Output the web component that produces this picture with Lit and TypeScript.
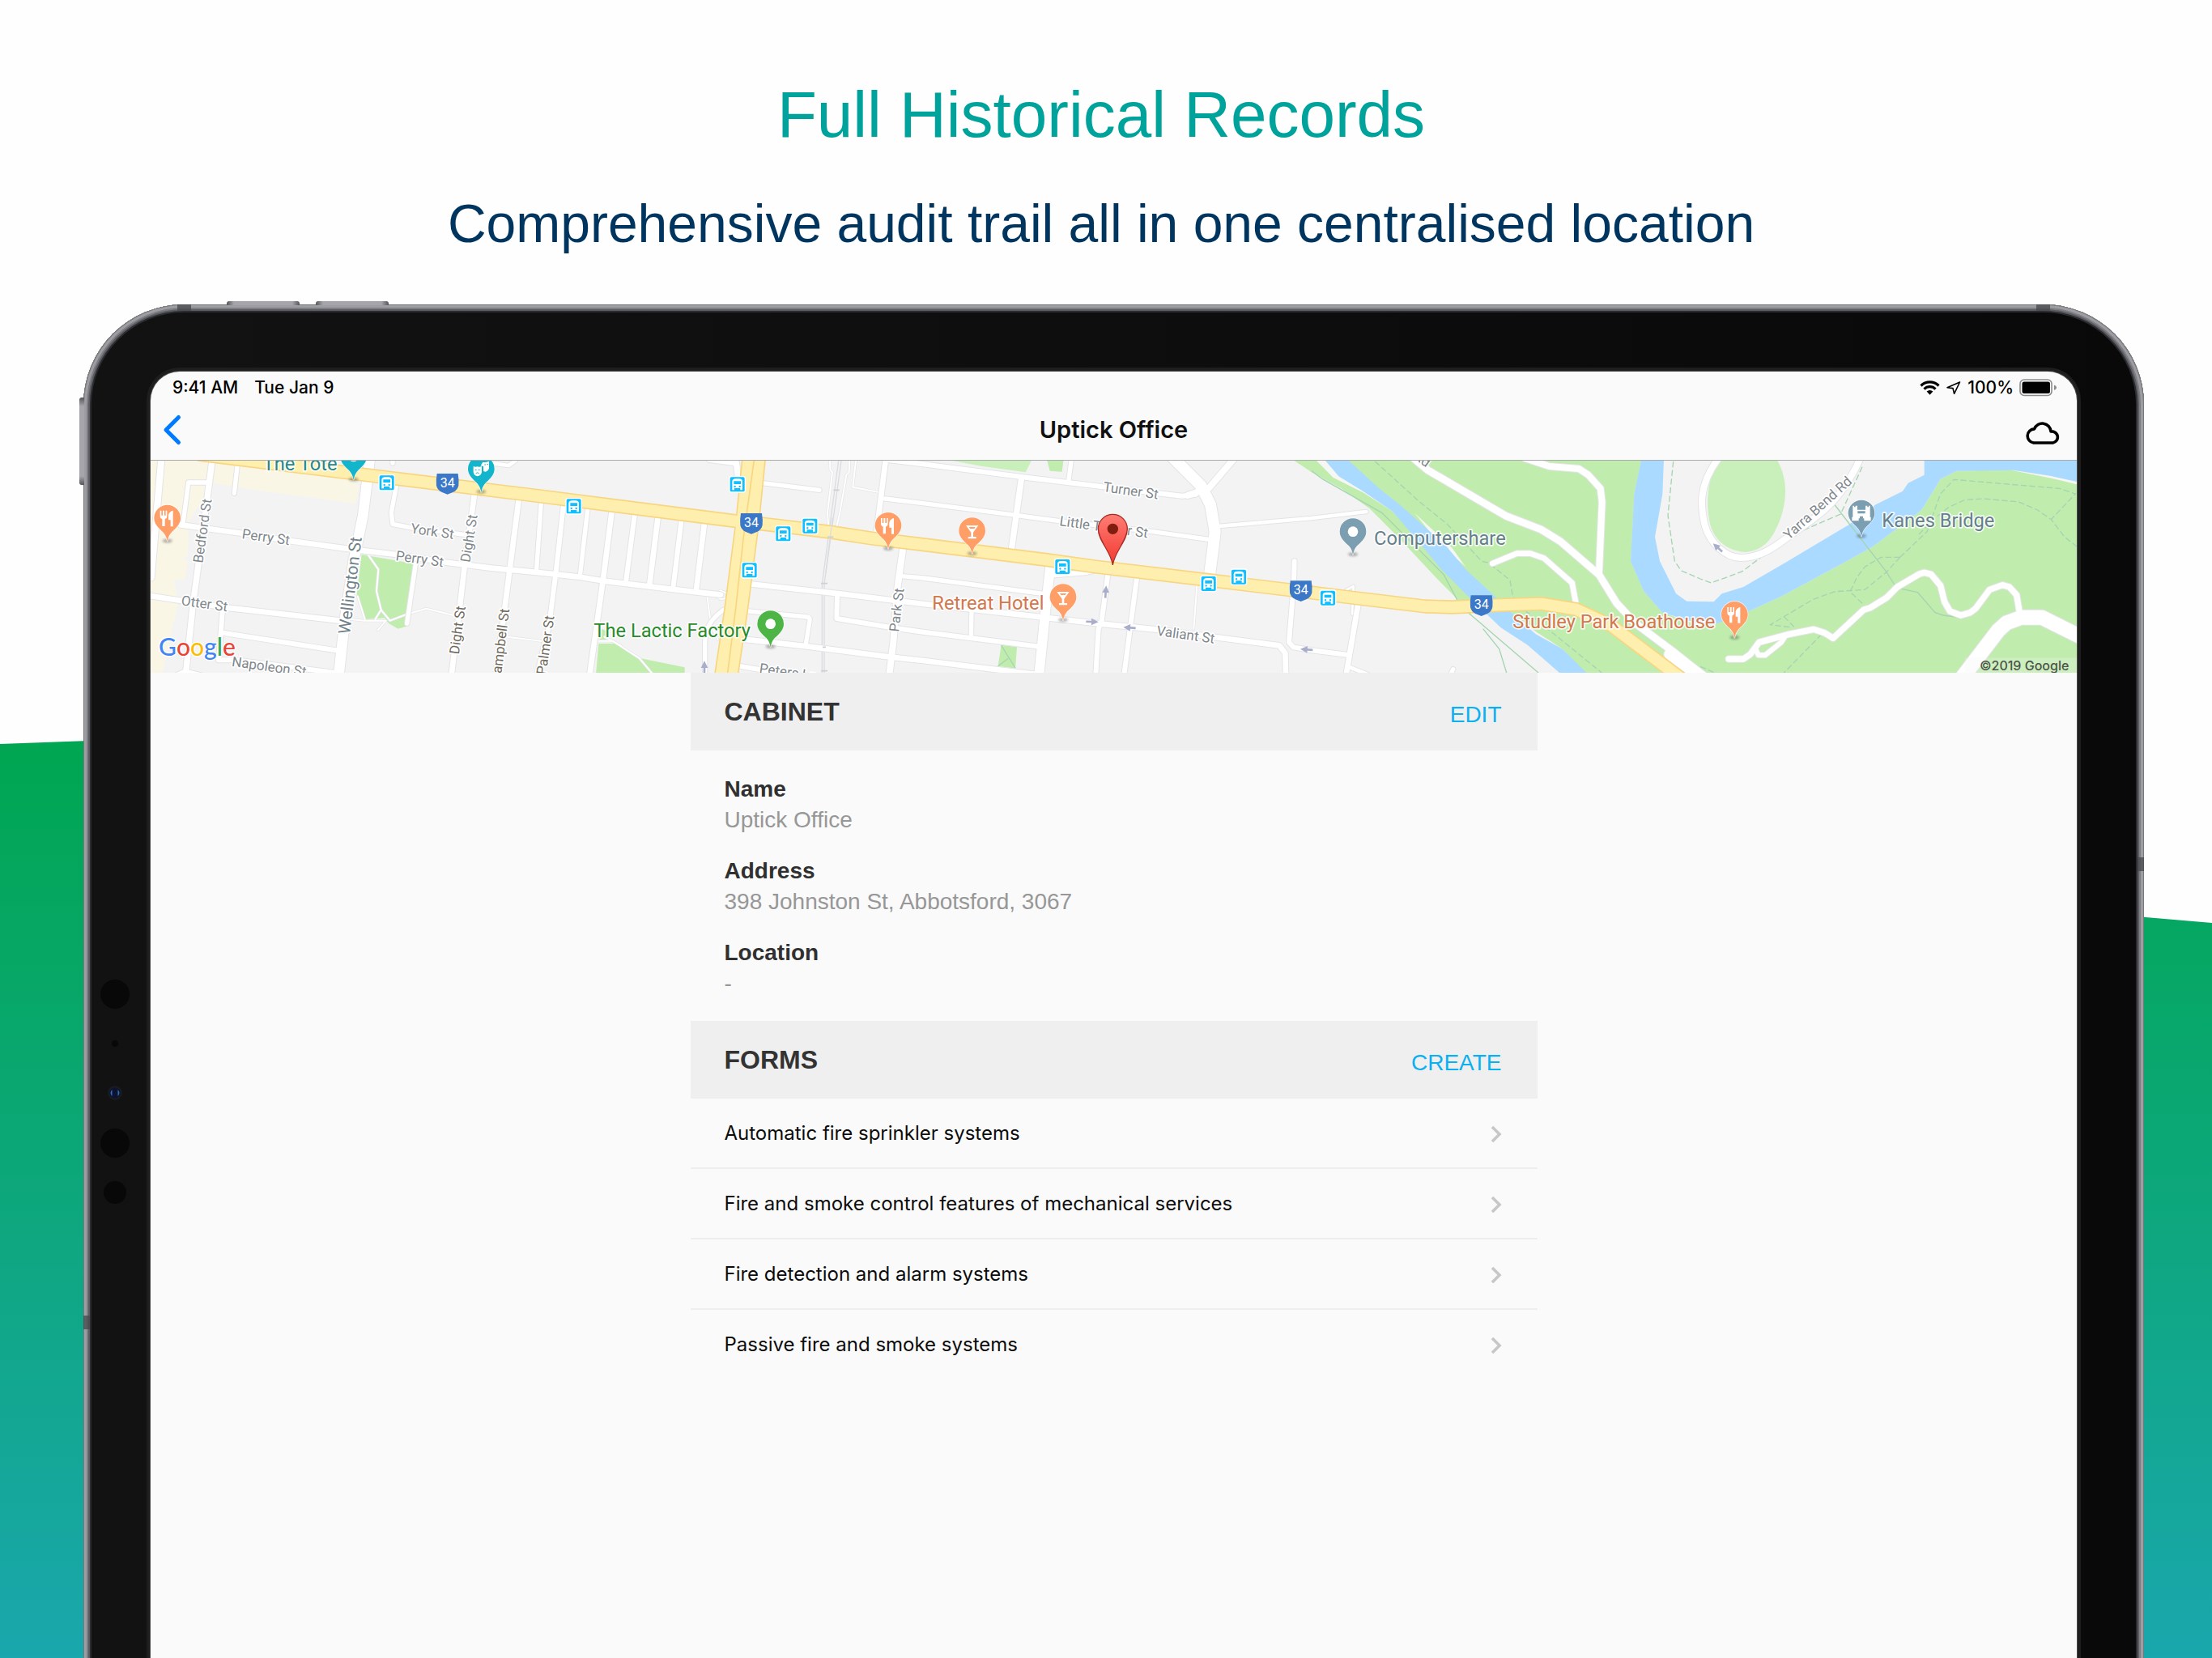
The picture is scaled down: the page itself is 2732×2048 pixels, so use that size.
import { LitElement, html, svg, css } from "lit";
import { customElement, property } from "lit/decorators.js";

type Pt = [number, number];

/* ---------- map data, drawn in the map's own canvas units ---------- */

/** Streets: [width, path]. */
const STREETS: [number, string][] = [
  [24, "M58 20L20 460"],
  [22, "M247 20L230 150L175 560L148 820"],
  [16, "M342 20L328 148"],
  [16, "M230 108H158L138 262"],
  [20, "M130 265L360 297L540 325L760 355L930 375L1120 405L1280 425L1440 440L1600 457L1690 472L2040 514L2130 524"],
  [38, "M830 20L805 230L770 400L740 600L715 820"],
  [20, "M10 527L300 572L740 622"],
  [16, "M930 110L910 220L915 262L980 275L1210 305"],
  [20, "M1218 150L1180 430L1160 600L1133 820"],
  [20, "M1382 172L1350 420L1298 820"],
  [16, "M1000 410L968 630"],
  [18, "M284 590L270 766H330L720 815"],
  [18, "M285 665L705 730"],
  [10, "M110 820L145 804L210 820"],
  [14, "M1290 38L1345 45L1370 27"],
  [16, "M915 20V36"],
  [16, "M1465 182L1448 430"],
  [18, "M1548 190L1520 440L1494 640L1450 820"],
  [16, "M1638 202L1610 445"],
  [20, "M1727 214L1695 465L1645 820"],
  [18, "M1812 224L1780 470"],
  [20, "M1898 236L1867 485"],
  [18, "M1985 246L1955 490"],
  [20, "M2070 258L2040 505"],
  [22, "M2090 22L2188 35L2196 100"],
  [16, "M2285 110L2496 136"],
  [20, "M2230 483L2570 520L2880 558L3320 607L3540 632L3740 652L4200 712L4222 740L4224 820"],
  [16, "M2215 583L2450 606Q2462 608 2460 620L2445 712"],
  [20, "M2210 688L2450 715L2760 755L2880 768L3290 818"],
  [18, "M2562 530L2560 612L2760 645L2880 662L3312 716"],
  [18, "M2180 785L2340 812"],
  [24, "M2806 350L2785 500L2770 700L2755 820"],
  [20, "M2742 20L2708 290"],
  [16, "M2740 168L2880 185L3230 230L3380 250L3730 290L3945 320"],
  [18, "M2750 24L2880 40L3250 88L3560 125L3840 158L3890 152"],
  [16, "M2800 455L2880 462L3325 520"],
  [22, "M3245 90L3208 355"],
  [16, "M3430 20L3420 98"],
  [42, "M3800 10L3910 120L3945 190L3962 290L3955 350L3942 450"],
  [24, "M4032 20L3940 128L3860 156"],
  [14, "M3975 270L4320 240L4522 216"],
  [36, "M3352 415L3335 570L3310 820"],
  [18, "M3350 452L3480 442L3530 430"],
  [18, "M3566 440L3542 620L3530 650L3520 820"],
  [18, "M3673 455L3625 820"],
  [16, "M3060 590L3058 682"],
  [18, "M4256 400L4254 480L4236 700L4252 718L4320 730L4450 746"],
  [20, "M4492 560L4448 820"],
  [14, "M4460 792L4530 820"],
  [8, "M4475 492L4470 595M4475 492L4448 506"],
  [16, "M4844 800L4834 822"],
  [26, "M4700 20L4750 62L5040 232L5170 282L5240 325L5385 450L5450 555L5520 630L5660 735L5780 830"],
  [24, "M5110 18L5200 48L5310 57L5345 80L5390 130L5396 180L5385 440"],
  [20, "M4990 408L5080 371H5130L5180 388L5285 480L5298 550"],
  [44, "M5648 745L5770 832"],
  [24, "M5826 20C5752 120 5760 200 5778 270C5796 330 5850 386 5910 387C6000 387 6060 325 6110 292C6200 230 6280 180 6352 20"],
  [22, "M5865 762H5920L5945 745L5978 700L6090 670L6180 652L6220 665L6252 685L6365 580L6390 572L6450 535L6490 495L6570 448L6590 442L6615 448L6650 490L6665 550L6685 585L6725 600L6760 590L6780 575L6832 505L6880 488L6905 495L6932 525L6943 590"],
  [18, "M5965 725L5975 748H6000L6060 700L6070 685"],
  [54, "M6735 825L6865 655L6895 628L6950 608H7025L7170 680"],
];

/** Narrow lanes and park paths. */
const LANES = [
  "M820 370L862 430L855 510L872 580L905 620L965 597L1040 575L1140 600",
  "M785 530L812 615",
  "M730 612L810 620H890L860 655",
  "M872 580L850 615",
  "M2632 20L2620 125L2720 145",
  "M2535 20L2536 60L2544 70L2526 220L2530 275",
  "M2608 20L2606 70L2596 80L2572 220L2560 272",
  "M3895 490L3883 650",
  "M2080 528L2095 640L2120 690",
  "M2110 522L2130 508L2155 520M2110 528L2130 540L2155 538",
  "M1665 695H1730L1830 760L1880 820M1700 680L1760 712",
  "M1340 680L1440 692L1490 700",
];

const RAIL = "M2578 20L2514 485V820M2568 20L2506 485V820";

const PARKS = [
  "M800 375L1000 410L965 595L970 640L935 650L900 630L885 610L815 615L782 520Z",
  "M1678 705H1740L1835 760L1997 793V820H1668Z",
  "M1690 650L1710 660L1705 690H1682Z",
  "M3340 27H3400L3395 68L3350 65Z",
  "M3170 710L3228 718L3222 797L3158 788Z",
  "M4245 20L4320 70L4430 130L4535 205L4650 320L4780 460L4865 545L5060 590L5150 660L5250 725L5340 820H7160V112L7060 88L6900 60L6710 65L6650 95L6580 210L6460 300L6400 345L6320 390L6060 530L5940 585L5760 640L5620 590L5550 510L5502 400L5515 150L5542 20Z",
];

const LAWNS = [
  "M2950 20H3285L3260 70L3100 48Z",
  "M5840 20C5776 80 5780 220 5802 280C5826 340 5880 365 5930 366C6000 360 6030 310 6054 250C6084 170 6084 90 6042 20Z",
];

const BANKS = "M4338 27H4372L4430 85L4520 140L4625 205L4740 330L4620 215L4510 145L4400 90ZM4700 220L4840 350L4890 420L4790 330ZM6920 64L7060 84L7160 108V116L7060 92Z";

const RIVERS = [
  "M4365 20H4450L4570 130L4652 195L4820 345L4890 430L5010 540L5060 590L5150 670L5250 725L5345 820H5246L5120 710L5020 645L4900 530L4800 430L4710 320L4620 215L4510 140L4420 85Z",
  "M5542 20H5625L5620 150L5592 310L5610 400L5670 520L5710 548L5810 550L5840 520L5920 495L6075 405L6310 265L6410 190L6510 140L6530 110L6590 80V20H7160V106L7060 84L6920 62L6710 65L6650 95L6580 210L6460 300L6400 345L6320 390L6060 530L5940 585L5810 635L5760 632L5620 590L5550 510L5502 400L5515 150Z",
];

const BEIGE =
  "M10 20H290L730 70L790 120L778 185L440 140L250 110L160 250L155 380L135 385L155 400L145 470L105 468L120 560L100 640L60 820H10Z";

const TRAILS_DASHED = [
  "M4555 30L4720 180L4820 260L4950 400L4975 405L5055 470L5065 530L5120 590L5395 813",
  "M5660 30L5640 230L5665 400L5690 435L5760 465L5800 480L5915 438L5985 385",
  "M6360 50L6280 225L6130 290",
  "M6570 300L6630 240L6680 200L6740 172L6810 168L6940 180L7010 210L7060 245L7110 310L7155 345",
  "M6500 385L6600 290L6650 150L6700 97L6910 115L7090 130L7150 150L7060 245",
  "M6500 385H6430L6370 420L6340 460L6315 513L6365 560",
  "M6500 385L6450 440L6370 505L6260 512L6180 540L6070 605L6020 635L6100 645",
  "M6070 605L6115 650",
  "M6210 670L6070 813",
  "M5760 790L5830 820",
];

const TRAILS_SOLID = [
  "M4320 65L4360 95L4580 220L4810 450L4860 545L4900 590L5160 813",
  "M4955 650L5015 725L5042 813",
  "M6250 180L6450 440L6485 495",
  "M6495 500L6565 515L6630 590L6660 600L6720 608",
  "M3170 712L3222 795M3158 788L3196 760",
];

const HIGHWAY =
  "M200 4L850 84L1440 156L2185 251L2290 262L2540 292L2690 315L2880 338L3340 395L3520 420L3940 470L4320 516L4490 537L4740 567L4840 570L5020 562L5170 557L5300 578L5430 638L5690 835";
const ARTERIAL = "M2254 10L2230 250L2188 575L2150 830";
const MEDIAN = "M2256 10L2215 310L2186 575L2154 830";

const ROUTES: Pt[] = [[1118, 113], [2244, 260], [4280, 510], [4949, 564]];
const STOPS: Pt[] = [
  [893, 109], [1586, 196], [2192, 115], [2362, 298], [2461, 269],
  [2237, 433], [3397, 420], [3938, 483], [4050, 458], [4380, 536],
];

type Glyph = "fork" | "glass" | "dot" | "bridge" | "mask";
const PINS: { at: Pt; fill: string; glyph: Glyph }[] = [
  { at: [80, 240], fill: "#ff9e67", glyph: "fork" },
  { at: [2751, 268], fill: "#ff9e67", glyph: "fork" },
  { at: [5887, 598], fill: "#ff9e67", glyph: "fork" },
  { at: [3062, 287], fill: "#ff9e67", glyph: "glass" },
  { at: [3399, 533], fill: "#ff9e67", glyph: "glass" },
  { at: [2315, 632], fill: "#4db546", glyph: "dot" },
  { at: [4473, 290], fill: "#7b9eb0", glyph: "dot" },
  { at: [6357, 222], fill: "#7b9eb0", glyph: "bridge" },
  { at: [770, 12], fill: "#12b5cb", glyph: "dot" },
  { at: [1243, 58], fill: "#12b5cb", glyph: "mask" },
];

/** One-way arrows: [position, angle]. */
const ARROWS: [Pt, number][] = [
  [[3557, 514], 4], [[3506, 624], 92], [[3646, 646], -86],
  [[4302, 727], -86], [[2070, 793], 0], [[5825, 350], -48],
];

const STREET_NAMES: { text: string; at: Pt; angle: number; dark?: boolean; big?: boolean }[] = [
  { text: "Perry St", at: [355, 315], angle: 8 },
  { text: "Perry St", at: [925, 396], angle: 8 },
  { text: "York St", at: [980, 295], angle: 8 },
  { text: "Otter St", at: [130, 562], angle: 8 },
  { text: "Napoleon St", at: [317, 788], angle: 8 },
  { text: "Bedford St", at: [211, 408], angle: -82 },
  { text: "Dight St", at: [1201, 406], angle: -81 },
  { text: "Dight St", at: [1160, 746], angle: -82, dark: true },
  { text: "Campbell St", at: [1314, 850], angle: -83, dark: true },
  { text: "Palmer St", at: [1483, 822], angle: -82, dark: true },
  { text: "Wellington St", at: [756, 672], angle: -83, big: true },
  { text: "Park St", at: [2790, 663], angle: -83 },
  { text: "Peters Ln", at: [2272, 813], angle: 8 },
  { text: "Turner St", at: [3546, 141], angle: 8 },
  { text: "Little Turner St", at: [3384, 267], angle: 8 },
  { text: "Valiant St", at: [3744, 674], angle: 8 },
  { text: "Yarra Bend Rd", at: [6088, 322], angle: -42 },
  { text: "Bend Rd", at: [4592, -58], angle: 36 },
];

const PLACES: { text: string; at: Pt; fill: string }[] = [
  { text: "The Tote", at: [434, 62], fill: "#25878c" },
  { text: "The Lactic Factory", at: [1660, 681], fill: "#298a2a" },
  { text: "Retreat Hotel", at: [2914, 580], fill: "#d3774c" },
  { text: "Computershare", at: [4551, 338], fill: "#657f8c" },
  { text: "Studley Park Boathouse", at: [5065, 647], fill: "#d3774c" },
  { text: "Kanes Bridge", at: [6433, 272], fill: "#657f8c" },
];

const glyphs: Record<Glyph, unknown> = {
  fork: svg`<path fill="#fff" d="M-27 -28h5v18h5v-18h6v18h5v-18h5v22q0 7-8 10v26h-10v-26q-8-3-8-10zM21 -28v59h-9v-24h-8v-18q2-14 17-17z"/>`,
  glass: svg`<path fill="#fff" fill-rule="evenodd" d="M-23 -20H23L4 6V22H15V29H-15V22H-4V6ZM-12 -14L-8 -8H8L12 -14Z"/>`,
  dot: svg`<circle r="19" fill="#fff"/>`,
  bridge: svg`<path fill="#fff" fill-rule="evenodd" d="M-32 -28h5v5h5v-5h7v15h30v-15h7v5h5v-5h5v42h3v14h-25v-9h-4v-8h-12v8h-4v9h-25v-14h3zM-14 -8v9h28v-9z"/>`,
  mask: svg`<path fill="#fff" d="M-29 -10q8 4 14 1q8 3 17-1v22q-2 12-15 15q-14-2-16-15zM6 -26q10 3 23-3v26q-3 12-14 13l-7-2v-18l-10-2z"/><path stroke="#12b5cb" stroke-width="3" d="M-23 3h6M-11 3h6M-20 16q6-5 12 0M12 -16h5M21 -17h5" fill="none"/>`,
};

@customElement("street-map")
export class StreetMap extends LitElement {
  static styles = css`
    :host { display: block; }
    .map { display: block; width: 100%; height: 262px; background: #f3f3f3; }
    .line { fill: none; stroke-linejoin: round; stroke-linecap: round; }
    .case { stroke: #e4e4e7; }
    .road { stroke: #fff; }
    .trail { fill: none; stroke: #a5d4b1; stroke-width: 4; }
    .dashed { stroke-dasharray: 22 10; }
    .name {
      font: 400 51px Roboto, "Liberation Sans", sans-serif;
      fill: #7f878c;
      stroke: #fff; stroke-width: 10px; stroke-linejoin: round; paint-order: stroke;
    }
    .name.dark { fill: #6f6a5c; }
    .name.big { font-size: 62px; fill: #71828a; }
    .place {
      font: 400 71px Roboto, "Liberation Sans", sans-serif;
      stroke: #fff; stroke-opacity: .85; stroke-width: 10px; stroke-linejoin: round; paint-order: stroke;
    }
    .route { font: 400 48px Roboto, sans-serif; fill: #fff; text-anchor: middle; }
    .logo { font: 500 90px Lato, sans-serif; stroke: #fff; stroke-width: 8px; paint-order: stroke; }
    .credit { font: 500 48px Inter, sans-serif; fill: #4c5548; text-anchor: end; }
  `;

  render() {
    return html`
      <svg class="map" viewBox="18 27 7137 786" preserveAspectRatio="xMidYMid slice" role="img" aria-label="Map">
        <defs>
          <linearGradient id="red" x1="0" y1="0" x2="0" y2="1">
            <stop offset="0" stop-color="#ff7d74" /><stop offset="1" stop-color="#f2382f" />
          </linearGradient>
          <filter id="soft" x="-50%" y="-50%" width="200%" height="200%"><feGaussianBlur stdDeviation="4" /></filter>
        </defs>
        <path d=${BEIGE} fill="#faf6e6" />
        ${PARKS.map((d) => svg`<path d=${d} fill="#c0ecae"/>`)}
        <path d="M4450 20H5542L5515 150L5502 400L5550 510L5620 590L5760 640L5400 813L5060 590L4890 430L4652 195Z" fill="#c0ecae" />
        <path d="M4900 592L5070 600L5300 813H4890Z" fill="#f3f3f3" />
        ${LAWNS.map((d) => svg`<path d=${d} fill="#c9f0bb"/>`)}
        <path d=${BANKS} fill="#f6f6f4" />
        ${RIVERS.map((d) => svg`<path d=${d} fill="#aadaff"/>`)}
        ${TRAILS_SOLID.map((d) => svg`<path class="trail" d=${d}/>`)}
        ${TRAILS_DASHED.map((d) => svg`<path class="trail dashed" d=${d}/>`)}
        <path class="line" d=${RAIL} stroke="#dadce0" stroke-width="4" />
        ${LANES.map((d) => svg`<path class="line case" d=${d} stroke-width="10"/>`)}
        ${LANES.map((d) => svg`<path class="line road" d=${d} stroke-width="6"/>`)}
        ${STREETS.map(([w, d]) => svg`<path class="line case" d=${d} stroke-width=${w + 6}/>`)}
        ${STREETS.map(([w, d]) => svg`<path class="line road" d=${d} stroke-width=${w}/>`)}
        <path class="line case" d="M2140 580C2100 610 2074 640 2072 700V820" stroke-width="22" />
        <path class="line road" d="M2140 580C2100 610 2074 640 2072 700V820" stroke-width="16" />
        <path class="line" d=${HIGHWAY} stroke="#f8d681" stroke-width="52" />
        <path class="line" d=${ARTERIAL} stroke="#f8d681" stroke-width="90" />
        <path class="line" d=${HIGHWAY} stroke="#feefae" stroke-width="42" />
        <path class="line" d=${ARTERIAL} stroke="#feefae" stroke-width="80" />
        <path class="line" d=${MEDIAN} stroke="#f8d681" stroke-width="5" />
        <path class="line" d="M2545 240L2520 440" stroke="#dadce0" stroke-width="4" />
        <path d="M2548 136h22M2526 310h22M2502 482h24M2508 718h12M2502 806h24" stroke="#cdd0d6" stroke-width="5" />
        ${ARROWS.map(([[x, y], a]) => svg`
          <path transform="translate(${x} ${y}) rotate(${a})" fill="#a9aecb" d="M0 -24L13 2H4V22H-4V2H-13Z"/>`)}
        ${STREET_NAMES.map((n) => svg`
          <text class="name ${n.dark ? "dark" : ""} ${n.big ? "big" : ""}"
            transform="translate(${n.at[0]} ${n.at[1]}) rotate(${n.angle})">${n.text}</text>`)}
        ${STOPS.map(([x, y]) => svg`
          <g transform="translate(${x} ${y})">
            <rect x="-31" y="-31" width="62" height="62" rx="9" fill="#fff"/>
            <rect x="-27" y="-27" width="54" height="54" rx="5" fill="#10bfff"/>
            <path fill="#fff" fill-rule="evenodd" d="M-19 21V-10Q-19 -21 -6 -21H6Q19 -21 19 -10V21H11V14H-11V21ZM-13 -12V-1H13V-12ZM-9 4a3.500 3.500 0 1 0 .1 0zM9 4a3.500 3.500 0 1 0 .1 0z"/>
          </g>`)}
        ${ROUTES.map(([x, y]) => svg`
          <g transform="translate(${x} ${y})">
            <path fill="#3b78c8" d="M-39 -38H39Q43 -14 41 6Q38 22 22 30L0 39L-22 30Q-38 22 -41 6Q-43 -14 -39 -38Z"/>
            <text class="route" y="12">34</text>
          </g>`)}
        ${PLACES.map((p) => svg`<text class="place" x=${p.at[0]} y=${p.at[1]} fill=${p.fill}>${p.text}</text>`)}
        ${PINS.map((p) => svg`
          <g transform="translate(${p.at[0]} ${p.at[1]})">
            <ellipse cy="84" rx="18" ry="7" fill="#000" opacity=".3" filter="url(#soft)"/>
            <path fill=${p.fill} stroke="#fff" stroke-width="4" stroke-opacity=".8" paint-order="stroke"
              d="M0 87Q-3 66 -15 53C-28 40 -49 24 -49 0A49 49 0 0 1 49 0C49 24 28 40 15 53Q3 66 0 87Z"/>
            ${glyphs[p.glyph]}
          </g>`)}
        <g transform="translate(3583 280)">
          <path fill="url(#red)" stroke="#a92a22" stroke-width="4"
            d="M0 134C-6 84 -54 44 -54 0A54 54 0 0 1 54 0C54 44 6 84 0 134Z"/>
          <circle r="20" fill="#7f1d10"/>
        </g>
        <text class="logo" x="48" y="751"><tspan fill="#4285f4">G</tspan><tspan fill="#ea4335">o</tspan><tspan fill="#fbbc05">o</tspan><tspan fill="#4285f4">g</tspan><tspan fill="#34a853">l</tspan><tspan fill="#ea4335">e</tspan></text>
        <rect x="6740" y="757" width="420" height="60" fill="#f3f3f3" opacity=".25" />
        <text class="credit" x="7126" y="803">©2019 Google</text>
      </svg>
    `;
  }
}

@customElement("section-bar")
export class SectionBar extends LitElement {
  @property() heading = "";
  @property() action = "";

  static styles = css`
    :host { display: block; }
    .bar {
      display: flex; align-items: center; justify-content: space-between;
      height: 96px; padding: 0 44px 0 42px; box-sizing: border-box; background: #efefef;
    }
    .heading { margin: 0; font-size: 32px; line-height: 40px; font-weight: 700; color: #333; }
    .action {
      border: 0; background: none; padding: 8px 0 0; cursor: pointer;
      font: 400 28px/36px "Liberation Sans", Arial, sans-serif; color: #0cb0f0;
    }
  `;

  render() {
    return html`
      <div class="bar">
        <h3 class="heading">${this.heading}</h3>
        <button class="action" type="button">${this.action}</button>
      </div>
    `;
  }
}

@customElement("app-root")
export class AppRoot extends LitElement {
  static styles = css`
    :host { display: block; font-family: "Liberation Sans", Arial, sans-serif; }
    .page {
      position: relative; display: flex; flex-direction: column;
      min-height: 100vh; box-sizing: border-box; background: #fefefe; overflow: hidden;
    }
    .hill {
      position: absolute; inset: 0;
      background: linear-gradient(#00a651 915px, #0ba775 1400px, #1aa7ad 2048px);
      clip-path: polygon(0 919px, 4% 915px, 97% 1133px, 100% 1140px, 100% 100%, 0 100%);
    }
    .intro { position: relative; padding: 94px 12px 60px 0; text-align: center; }
    .title { margin: 0 0 46px; font-size: 80px; line-height: 96px; font-weight: 400; color: #00a39b; }
    .subtitle { margin: 0; font-size: 66px; line-height: 80px; font-weight: 400; color: #00355f; }

    .device {
      position: relative; flex: 1; display: flex; box-sizing: border-box;
      margin: 0 84px -20px 103px; padding: 83px 83px 0;
      border-radius: 124px 124px 0 0;
      background: linear-gradient(90deg, #121212, #090909);
      box-shadow:
        inset 0 0 0 1px #77787c, inset 0 0 0 4px #9d9da2,
        inset 0 0 0 6px #7d7e83, inset 0 0 0 8px #5b5c61, inset 0 0 0 10px #2b2c2f;
    }
    .key { position: absolute; background: linear-gradient(90deg, #55565a, #a5a6ab 10%, #a5a6ab 90%, #55565a); }
    .key.power { top: -4px; left: 177px; width: 90px; height: 5px; border-radius: 3px 3px 0 0; }
    .key.volume { top: -4px; left: 287px; width: 90px; height: 5px; border-radius: 3px 3px 0 0; }
    .key.side {
      top: 115px; left: -5px; width: 6px; height: 108px; border-radius: 3px 0 0 3px;
      background: linear-gradient(#55565a, #a5a6ab 10%, #a5a6ab 90%, #55565a);
    }
    .band { position: absolute; background: #47484c; opacity: .75; }
    .band.tl { top: 0; left: 116px; width: 17px; height: 8px; }
    .band.tr { top: 0; right: 116px; width: 17px; height: 8px; }
    .band.l { top: 1249px; left: 0; width: 8px; height: 17px; }
    .band.r { top: 683px; right: 0; width: 8px; height: 17px; }
    .sensors { position: absolute; top: 832px; left: 19px; width: 40px; height: 290px; }

    .screen {
      flex: 1; min-width: 0; display: flex; flex-direction: column;
      background: #fafafa; border-radius: 36px 36px 0 0; overflow: hidden;
      box-shadow: 0 0 0 1px #4a4849, 0 0 0 5px #1f1e1f;
    }
    .status {
      display: flex; align-items: center; justify-content: space-between;
      height: 40px; padding: 0 24px 0 27px;
      font: 500 21px/26px Inter, "Liberation Sans", sans-serif; color: #000;
    }
    .group { display: flex; align-items: center; }
    .clock { gap: 20px; }
    .indicators { gap: 7px; }
    .icon { display: block; flex: none; }
    .nav {
      display: grid; grid-template-columns: 1fr auto 1fr; align-items: center;
      height: 70px; box-sizing: border-box; padding: 0 14px 5px;
      border-bottom: 1px solid #aaa;
    }
    .nav-title { margin: 0; font: 600 29px/36px Inter, "Liberation Sans", sans-serif; color: #111; }
    .nav-button { border: 0; background: none; padding: 0; cursor: pointer; justify-self: start; }
    .nav-button.end { justify-self: end; padding: 8px 6px 0 0; }

    .content { width: 100%; max-width: 1046px; margin: 0 auto; }
    .fields { display: flex; flex-direction: column; gap: 25px; margin: 0; padding: 29px 42px 27px; font-size: 28px; line-height: 38px; }
    .label { font-weight: 700; color: #303030; }
    .value { margin: 0; color: #979797; }
    .forms { list-style: none; margin: 0; padding: 0; }
    .form + .form { border-top: 2px solid #eee; }
    .form-link {
      display: flex; align-items: center; justify-content: space-between;
      height: 85px; padding: 0 44px 0 42px; text-decoration: none; color: #0c0c0c;
      font: 400 24px/32px Inter, "Liberation Sans", sans-serif;
    }
  `;

  private fields = [
    { label: "Name", value: "Uptick Office" },
    { label: "Address", value: "398 Johnston St, Abbotsford, 3067" },
    { label: "Location", value: "-" },
  ];

  private forms = [
    "Automatic fire sprinkler systems",
    "Fire and smoke control features of mechanical services",
    "Fire detection and alarm systems",
    "Passive fire and smoke systems",
  ];

  private renderStatus() {
    return html`
      <div class="status">
        <div class="group clock"><span>9:41 AM</span><span>Tue Jan 9</span></div>
        <div class="group indicators">
          <svg class="icon" width="25" height="18" viewBox="0 0 25 18" fill="none" stroke="#000" stroke-width="3.2">
            <path d="M1.500 6.500a15.500 15.500 0 0 1 22 0M5.500 10.600a9.800 9.800 0 0 1 14 0" />
            <path d="M8.600 13.600a5.600 5.600 0 0 1 7.800 0L12.500 17.800z" fill="#000" stroke="none" />
          </svg>
          <svg class="icon" width="20" height="18" viewBox="0 0 20 18" fill="none" stroke="#000" stroke-width="1.600" stroke-linejoin="round">
            <path d="M17.500 2L2 8.800L9 9.600L10.600 16.300Z" />
          </svg>
          <span>100%</span>
          <svg class="icon" width="47" height="22" viewBox="0 0 47 22">
            <rect x="1" y="1" width="39" height="19.500" rx="5" fill="none" stroke="#8c8c8c" stroke-width="1.600" />
            <rect x="3.500" y="3.500" width="34.500" height="14.500" rx="2.500" fill="#000" />
            <path d="M43 7.500q3 1 3 3.300t-3 3.300z" fill="#8c8c8c" />
          </svg>
        </div>
      </div>
    `;
  }

  private renderNav() {
    return html`
      <div class="nav">
        <button class="nav-button" type="button" aria-label="Back">
          <svg class="icon" width="26" height="40" viewBox="0 0 26 40" fill="none" stroke="#007aff" stroke-width="5" stroke-linecap="round" stroke-linejoin="round">
            <path d="M20.500 4.500L5 20L20.500 35.500" />
          </svg>
        </button>
        <h2 class="nav-title">Uptick Office</h2>
        <button class="nav-button end" type="button" aria-label="Sync">
          <svg class="icon" width="44" height="30" viewBox="0 0 44 30" fill="none" stroke="#000" stroke-width="3.600" stroke-linejoin="round">
            <path d="M10.500 27A8.600 8.600 0 0 1 11.500 9.900A10.600 10.600 0 0 1 32 13A7 7 0 1 1 34.500 27Z" />
          </svg>
        </button>
      </div>
    `;
  }

  render() {
    return html`
      <main class="page">
        <div class="hill"></div>
        <header class="intro">
          <h1 class="title">Full Historical Records</h1>
          <p class="subtitle">Comprehensive audit trail all in one centralised location</p>
        </header>
        <div class="device">
          <span class="key power"></span><span class="key volume"></span><span class="key side"></span>
          <span class="band tl"></span><span class="band tr"></span><span class="band l"></span><span class="band r"></span>
          <svg class="sensors" viewBox="0 0 40 290" aria-hidden="true">
            <g fill="#080808">
              <circle cx="20" cy="20" r="18" /><circle cx="20" cy="81" r="4" />
              <circle cx="20" cy="204" r="18" /><circle cx="20" cy="265" r="14" />
            </g>
            <circle cx="20" cy="142" r="9" fill="#191b20" />
            <circle cx="20" cy="142" r="6.500" fill="#0c1230" />
            <path d="M16.500 138q-4 4 0 8zM23.500 138q4 4 0 8z" fill="#2f6fb5" />
          </svg>
          <section class="screen">
            ${this.renderStatus()}
            ${this.renderNav()}
            <street-map></street-map>
            <div class="content">
              <section-bar heading="CABINET" action="EDIT"></section-bar>
              <dl class="fields">
                ${this.fields.map((f) => html`<div><dt class="label">${f.label}</dt><dd class="value">${f.value}</dd></div>`)}
              </dl>
              <section-bar heading="FORMS" action="CREATE"></section-bar>
              <ul class="forms">
                ${this.forms.map((name) => html`
                  <li class="form">
                    <a class="form-link" href="#">
                      <span>${name}</span>
                      <svg class="icon" width="14" height="22" viewBox="0 0 14 22" fill="none" stroke="#c7c7c7" stroke-width="3.600">
                        <path d="M2 3L11 12L2 21" />
                      </svg>
                    </a>
                  </li>`)}
              </ul>
            </div>
          </section>
        </div>
      </main>
    `;
  }
}
